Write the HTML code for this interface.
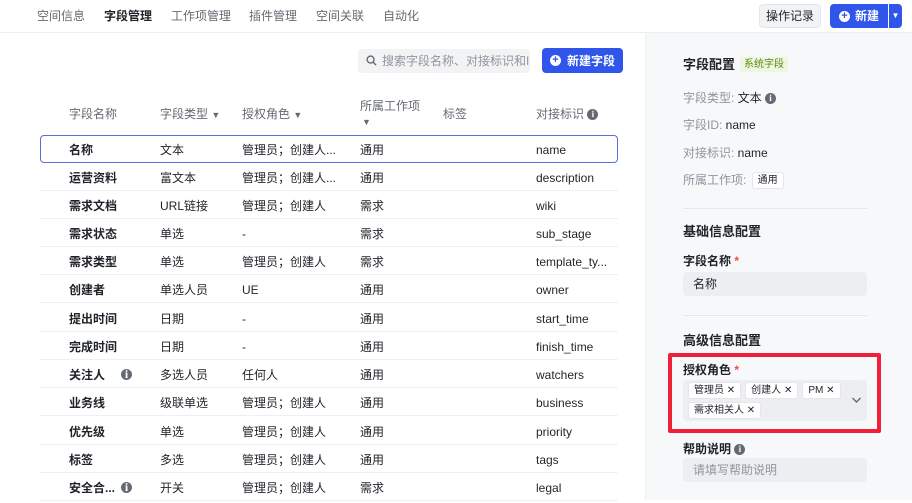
<!DOCTYPE html>
<html><head><meta charset="utf-8"><style>
*{box-sizing:border-box;margin:0;padding:0}
body{width:912px;height:500px;overflow:hidden;background:#fff;font-family:"Liberation Sans","Noto Sans CJK SC",sans-serif;color:#1f2329;position:relative;font-size:12px}
.a{position:absolute;white-space:nowrap}
.top{position:absolute;left:0;top:0;width:912px;height:33px;border-bottom:1px solid #eceef1;background:#fff}
.nav{top:0;line-height:33px;font-size:12px;color:#646a73}
.btn{position:absolute;border-radius:4px;font-size:12px;display:flex;align-items:center;justify-content:center;line-height:1}
.info{display:inline-block;width:11px;height:11px;border-radius:50%;background:#646a73;color:#fff;font-size:9px;line-height:11px;text-align:center;font-weight:bold;vertical-align:middle;font-family:"Liberation Serif",serif}
.hd{top:105px;line-height:18px;color:#646a73;font-size:12px}
.row{position:absolute;left:40px;width:578px;height:28px;border-bottom:1px solid #eff0f2}
.row span{position:absolute;top:1px;height:27px;line-height:29px;white-space:nowrap;font-size:12px;color:#1f2329}
.row .n{left:29px;font-weight:bold}
.row .t{left:120px}.row .r{left:202px}.row .w{left:320px}.row .i{left:496px}
.row span.info{top:9px;height:11px;line-height:11px;left:81px;color:#fff}
.panel{position:absolute;left:645px;top:33px;width:267px;height:467px;background:#f7f8fa;border-left:1px solid #eef0f2}
.lbl{color:#8f959e;font-size:12px;line-height:16px}
.tag{display:inline-block;background:#fff;border:1px solid #e4e6e9;border-radius:3px;font-size:10px;padding:0 5px;height:17px;line-height:15px;color:#1f2329;margin-right:4px;vertical-align:middle}
.red{color:#f54a45}
</style></head><body>
<div class="top"></div>
<div class="a nav" style="left:37px">空间信息</div>
<div class="a nav" style="left:104px;color:#1f2329;font-weight:bold">字段管理</div>
<div class="a nav" style="left:171px">工作项管理</div>
<div class="a nav" style="left:249px">插件管理</div>
<div class="a nav" style="left:316px">空间关联</div>
<div class="a nav" style="left:383px">自动化</div>
<div class="btn" style="left:759px;top:4px;width:62px;height:24px;background:#f2f3f5;border:1px solid #e4e6e9;color:#1f2329">操作记录</div>
<div class="btn" style="left:830px;top:4px;width:58px;height:24px;background:#2f55eb;color:#fff;border-radius:4px 0 0 4px;font-weight:bold"><span style="display:inline-block;width:11px;height:11px;border-radius:50%;background:#fff;color:#2f55eb;font-size:11px;line-height:11px;text-align:center;margin-right:5px">+</span>新建</div>
<div class="btn" style="left:889px;top:4px;width:13px;height:24px;background:#2f55eb;color:#fff;border-radius:0 4px 4px 0;font-size:8px">▼</div>

<div class="a" style="left:358px;top:49px;width:172px;height:24px;background:#f2f3f5;border-radius:4px;color:#8f959e;font-size:12px;line-height:24px;padding-left:8px;overflow:hidden"><svg width="11" height="11" viewBox="0 0 12 12" style="vertical-align:-1px;margin-right:5px"><circle cx="5" cy="5" r="3.8" fill="none" stroke="#646a73" stroke-width="1.5"/><path d="M8 8l3 3" stroke="#646a73" stroke-width="1.5"/></svg>搜索字段名称、对接标识和ID</div>
<div class="btn" style="left:542px;top:48px;width:81px;height:25px;background:#2f55eb;color:#fff;font-weight:bold"><span style="display:inline-block;width:11px;height:11px;border-radius:50%;background:#fff;color:#2f55eb;font-size:11px;line-height:11px;text-align:center;margin-right:6px">+</span>新建字段</div>

<div class="a hd" style="left:69px">字段名称</div>
<div class="a hd" style="left:160px">字段类型 <span style="font-size:9px">▼</span></div>
<div class="a hd" style="left:242px">授权角色 <span style="font-size:9px">▼</span></div>
<div class="a hd" style="left:360px;top:97px">所属工作项</div>
<div class="a hd" style="left:362px;top:113px;font-size:9px">▼</div>
<div class="a hd" style="left:443px">标签</div>
<div class="a hd" style="left:536px">对接标识 <span class="info">i</span></div>

<div class="row" style="top:135px;border:1px solid #5b6fd6;border-radius:4px"><span class="n" style="left:28px;top:0">名称</span><span class="t" style="left:119px;top:0">文本</span><span class="r" style="left:201px;top:0">管理员；创建人...</span><span class="w" style="left:319px;top:0">通用</span><span class="i" style="left:495px;top:0">name</span></div>
<div class="row" style="top:163px"><span class="n">运营资料</span><span class="t">富文本</span><span class="r">管理员；创建人...</span><span class="w">通用</span><span class="i">description</span></div>
<div class="row" style="top:191px"><span class="n">需求文档</span><span class="t">URL链接</span><span class="r">管理员；创建人</span><span class="w">需求</span><span class="i">wiki</span></div>
<div class="row" style="top:219px"><span class="n">需求状态</span><span class="t">单选</span><span class="r">-</span><span class="w">需求</span><span class="i">sub_stage</span></div>
<div class="row" style="top:247px"><span class="n">需求类型</span><span class="t">单选</span><span class="r">管理员；创建人</span><span class="w">需求</span><span class="i">template_ty...</span></div>
<div class="row" style="top:275px"><span class="n">创建者</span><span class="t">单选人员</span><span class="r">UE</span><span class="w">通用</span><span class="i">owner</span></div>
<div class="row" style="top:304px"><span class="n">提出时间</span><span class="t">日期</span><span class="r">-</span><span class="w">通用</span><span class="i">start_time</span></div>
<div class="row" style="top:332px"><span class="n">完成时间</span><span class="t">日期</span><span class="r">-</span><span class="w">通用</span><span class="i">finish_time</span></div>
<div class="row" style="top:360px"><span class="n">关注人</span><span class="info">i</span><span class="t">多选人员</span><span class="r">任何人</span><span class="w">通用</span><span class="i">watchers</span></div>
<div class="row" style="top:388px"><span class="n">业务线</span><span class="t">级联单选</span><span class="r">管理员；创建人</span><span class="w">通用</span><span class="i">business</span></div>
<div class="row" style="top:417px"><span class="n">优先级</span><span class="t">单选</span><span class="r">管理员；创建人</span><span class="w">通用</span><span class="i">priority</span></div>
<div class="row" style="top:445px"><span class="n">标签</span><span class="t">多选</span><span class="r">管理员；创建人</span><span class="w">通用</span><span class="i">tags</span></div>
<div class="row" style="top:473px"><span class="n">安全合...</span><span class="info">i</span><span class="t">开关</span><span class="r">管理员；创建人</span><span class="w">需求</span><span class="i">legal</span></div>

<div class="panel"></div>
<div class="a" style="left:683px;top:57px;font-size:13px;font-weight:bold;line-height:16px">字段配置</div>
<div class="a" style="left:740px;top:57px;background:#eef6e0;color:#5a8a12;font-size:10px;padding:1px 4px;border-radius:2px;line-height:13px">系统字段</div>
<div class="a lbl" style="left:683px;top:90px">字段类型: <span style="color:#1f2329">文本</span> <span class="info">i</span></div>
<div class="a lbl" style="left:683px;top:117px">字段ID: <span style="color:#1f2329">name</span></div>
<div class="a lbl" style="left:683px;top:145px">对接标识: <span style="color:#1f2329">name</span></div>
<div class="a lbl" style="left:683px;top:172px">所属工作项: <span class="tag" style="margin-left:2px">通用</span></div>
<div class="a" style="left:683px;top:208px;width:184px;height:1px;background:#e4e6e9"></div>
<div class="a" style="left:683px;top:224px;font-size:13px;font-weight:bold;line-height:16px">基础信息配置</div>
<div class="a" style="left:683px;top:253px;font-size:12px;font-weight:bold;line-height:16px">字段名称 <span class="red">*</span></div>
<div class="a" style="left:683px;top:272px;width:184px;height:24px;background:#eceef1;border-radius:4px;padding-left:10px;line-height:24px;font-size:12px">名称</div>
<div class="a" style="left:683px;top:315px;width:184px;height:1px;background:#e4e6e9"></div>
<div class="a" style="left:683px;top:333px;font-size:13px;font-weight:bold;line-height:16px">高级信息配置</div>
<div class="a" style="left:668px;top:353px;width:213px;height:80px;border:4px solid #f0203a;border-radius:2px"></div>
<div class="a" style="left:683px;top:362px;font-size:12px;font-weight:bold;line-height:16px">授权角色 <span class="red">*</span></div>
<div class="a" style="left:683px;top:380px;width:184px;height:41px;background:#eceef1;border-radius:4px"></div>
<div class="a" style="left:688px;top:382px"><span class="tag">管理员 ✕</span><span class="tag">创建人 ✕</span><span class="tag">PM ✕</span></div>
<div class="a" style="left:688px;top:402px"><span class="tag">需求相关人 ✕</span></div>
<svg class="a" style="left:851px;top:396px" width="11" height="8" viewBox="0 0 11 8"><path d="M1.5 2l4 4 4-4" fill="none" stroke="#646a73" stroke-width="1.4"/></svg>
<div class="a" style="left:683px;top:441px;font-size:12px;font-weight:bold;line-height:16px">帮助说明 <span class="info">i</span></div>
<div class="a" style="left:683px;top:458px;width:184px;height:24px;background:#eceef1;border-radius:4px;padding-left:10px;line-height:24px;font-size:12px;color:#8f959e">请填写帮助说明</div>
</body></html>
